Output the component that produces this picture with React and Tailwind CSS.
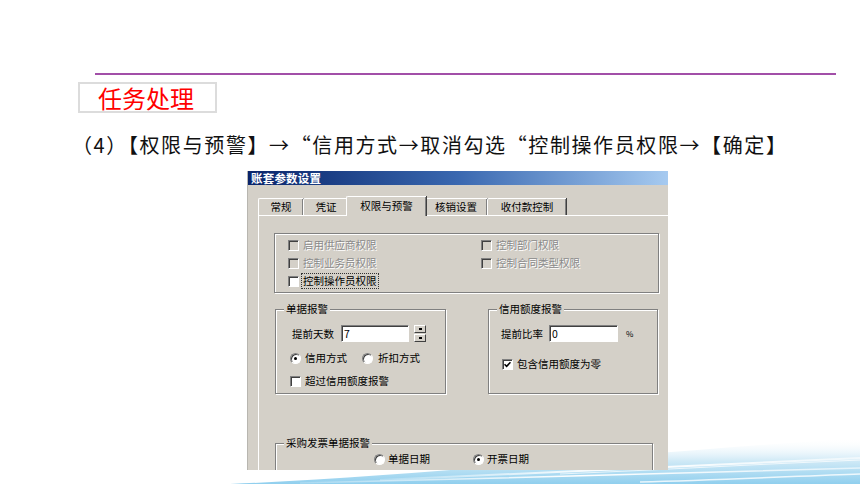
import React from "react";

const CJK = { fontFamily: '"Noto Sans CJK SC", "Noto Sans", sans-serif' };

function Check({ checked = false, disabled = false }) {
  return (
    <span
      className={`flex h-[11px] w-[11px] shrink-0 items-center justify-center border border-t-[#808080] border-l-[#808080] border-r-white border-b-white shadow-[inset_1px_1px_0_#404040] ${
        disabled ? "bg-[#d4d0c8]" : "bg-white"
      }`}
    >
      {checked && (
        <svg width="7" height="7" viewBox="0 0 7 7">
          <path d="M0.5 3.2 L2.6 5.3 L6.5 1.2" fill="none" stroke="#000" strokeWidth="1.6" />
        </svg>
      )}
    </span>
  );
}

function Radio({ checked = false }) {
  return (
    <span className="flex h-[11px] w-[11px] shrink-0 items-center justify-center rounded-full border border-t-[#808080] border-l-[#808080] border-r-white border-b-white bg-white shadow-[inset_1px_1px_0_#404040]">
      {checked && <span className="h-[3px] w-[3px] rounded-full bg-black" />}
    </span>
  );
}

function Group({ label, className, children }) {
  return (
    <div
      className={`relative border border-[#808080] shadow-[1px_1px_0_#fff,inset_1px_1px_0_#fff] ${className}`}
    >
      {label && (
        <span className="absolute left-[8px] top-[-8px] bg-[#d4d0c8] px-[2px] leading-[14px]">
          {label}
        </span>
      )}
      {children}
    </div>
  );
}

const disabledText = "text-[#8a8a8a] [text-shadow:1px_1px_0_#fff]";

function Tab({ label, active, w }) {
  if (active) {
    return (
      <div
        className={`relative z-10 -mx-[2px] mb-[-1px] flex h-[20px] items-start justify-center rounded-tl-[2px] border-l border-t border-white bg-[#d4d0c8] pt-[2px] shadow-[inset_-1px_0_0_#808080,1px_0_0_#404040] ${w}`}
      >
        {label}
      </div>
    );
  }
  return (
    <div
      className={`flex h-[17px] items-center justify-center rounded-tl-[2px] border-l border-t border-white shadow-[inset_-1px_0_0_#808080,1px_0_0_#404040] ${w}`}
    >
      {label}
    </div>
  );
}

function Wave() {
  return (
    <svg
      className="absolute bottom-0 left-0"
      width="860"
      height="70"
      viewBox="0 0 860 70"
    >
      <defs>
        <linearGradient id="wv" x1="0" y1="0" x2="0" y2="1">
          <stop offset="0" stopColor="#ffffff" stopOpacity="0" />
          <stop offset="0.5" stopColor="#cfe9f6" />
          <stop offset="1" stopColor="#90cfee" />
        </linearGradient>
        <linearGradient id="wh" x1="0" y1="0" x2="1" y2="0">
          <stop offset="0" stopColor="#ffffff" stopOpacity="0.2" />
          <stop offset="0.5" stopColor="#ffffff" stopOpacity="1" />
          <stop offset="1" stopColor="#ffffff" stopOpacity="0.6" />
        </linearGradient>
      </defs>
      <path d="M230 70 C 420 62, 620 40, 860 24 L860 70 Z" fill="url(#wv)" />
      <path d="M380 66 C 540 60, 700 52, 860 44" fill="none" stroke="url(#wh)" strokeWidth="2" />
      <path d="M300 69 C 480 64, 680 60, 860 54" fill="none" stroke="url(#wh)" strokeWidth="1.5" />
      <path d="M560 60 C 660 56, 760 50, 860 46" fill="none" stroke="#ffffff" strokeOpacity="0.7" strokeWidth="1" />
      <path d="M640 68 C 720 66, 800 62, 860 60" fill="none" stroke="#ffffff" strokeOpacity="0.8" strokeWidth="1.5" />
    </svg>
  );
}

export default function App() {
  return (
    <div className="relative h-[484px] w-[860px] overflow-hidden bg-white" style={CJK}>
      <Wave />
      <div className="relative pt-[73px]">
        <div className="ml-[95px] h-[2px] w-[741px] bg-[#a24fa8]" />
        <div className="ml-[78px] mt-[7px] flex h-[31px] w-[139px] items-center border-2 border-[#dcdcdc] pl-[18px] text-[24px] leading-none text-[#ff0000]">
          任务处理
        </div>
        <div className="ml-[72px] mt-[20px] h-[24px] whitespace-nowrap text-[20px] leading-[24px] tracking-[1.6px] text-[#111]">
          （4）【权限与预警】→“信用方式→取消勾选“控制操作员权限→【确定】
        </div>

        {/* dialog */}
        <div className="ml-[247px] mt-[14px] flex h-[299px] w-[421px] flex-col overflow-hidden border-l border-[#b8b6b0] bg-[#d4d0c8] text-[10.5px] leading-[14px] text-black">
          <div className="flex h-[14px] shrink-0 items-center bg-linear-to-r from-[#0a246a] via-[#3a68b0] to-[#a6caf0] pl-[3px] text-[11.5px] font-bold tracking-[0.2px] text-white">
            账套参数设置
          </div>
          <div className="mt-[11px] flex h-[19px] items-end pl-[10px]">
            <Tab label="常规" w="w-[45px]" />
            <Tab label="凭证" w="w-[45px]" />
            <Tab label="权限与预警" w="w-[80px]" active />
            <Tab label="核销设置" w="w-[63px]" />
            <Tab label="收付款控制" w="w-[79px]" />
          </div>
          <div className="ml-[10px] flex-1 border-l border-t border-white pl-[15px] pt-[17px]">
            <Group className="h-[60px] w-[385px]">
              <div className="grid grid-cols-[193px_1fr] pl-[13px] pt-[2px]">
                <div className="flex h-[18px] items-center gap-[4px]">
                  <Check disabled />
                  <span className={disabledText}>启用供应商权限</span>
                </div>
                <div className="flex h-[18px] items-center gap-[4px]">
                  <Check disabled />
                  <span className={disabledText}>控制部门权限</span>
                </div>
                <div className="flex h-[18px] items-center gap-[4px]">
                  <Check disabled />
                  <span className={disabledText}>控制业务员权限</span>
                </div>
                <div className="flex h-[18px] items-center gap-[4px]">
                  <Check disabled />
                  <span className={disabledText}>控制合同类型权限</span>
                </div>
                <div className="flex h-[18px] items-center gap-[3px]">
                  <Check />
                  <span className="px-[1px] outline-1 outline-dotted outline-[#333]">
                    控制操作员权限
                  </span>
                </div>
              </div>
            </Group>

            <div className="ml-[1px] mt-[16px] flex gap-[42px]">
              <Group label="单据报警" className="h-[85px] w-[171px]">
                <div className="ml-[16px] mt-[15px] flex h-[17px] items-center">
                  <span className="w-[49px]">提前天数</span>
                  <div className="flex h-[17px] w-[68px] items-center border border-t-[#808080] border-l-[#808080] border-r-white border-b-white bg-white pl-[2px] shadow-[inset_1px_1px_0_#404040]">
                    7
                  </div>
                  <div className="ml-[5px] flex h-[17px] w-[12px] flex-col gap-[1px]">
                    <div className="flex flex-1 items-center justify-center border border-t-white border-l-white border-r-[#404040] border-b-[#404040] bg-[#d4d0c8]">
                      <span className="h-[2px] w-[3px] bg-black" />
                    </div>
                    <div className="flex flex-1 items-center justify-center border border-t-white border-l-white border-r-[#404040] border-b-[#404040] bg-[#d4d0c8]">
                      <span className="h-[2px] w-[3px] bg-black" />
                    </div>
                  </div>
                </div>
                <div className="ml-[14px] mt-[8px] flex h-[16px] items-center">
                  <Radio checked />
                  <span className="ml-[4px]">信用方式</span>
                  <span className="ml-[15px]">
                    <Radio />
                  </span>
                  <span className="ml-[5px]">折扣方式</span>
                </div>
                <div className="ml-[14px] mt-[7px] flex h-[16px] items-center gap-[4px]">
                  <Check />
                  <span>超过信用额度报警</span>
                </div>
              </Group>

              <Group label="信用额度报警" className="h-[85px] w-[170px]">
                <div className="ml-[12px] mt-[15px] flex h-[17px] items-center">
                  <span className="w-[48px]">提前比率</span>
                  <div className="flex h-[17px] w-[69px] items-center border border-t-[#808080] border-l-[#808080] border-r-white border-b-white bg-white pl-[2px] shadow-[inset_1px_1px_0_#404040]">
                    0
                  </div>
                  <span className="ml-[8px] text-[8px]">%</span>
                </div>
                <div className="ml-[13px] mt-[14px] flex h-[16px] items-center gap-[4px]">
                  <Check checked />
                  <span>包含信用额度为零</span>
                </div>
              </Group>
            </div>

            <Group label="采购发票单据报警" className="ml-[1px] mt-[49px] h-[29px] w-[378px]">
              <div className="ml-[98px] mt-[7px] flex h-[16px] items-center">
                <Radio />
                <span className="ml-[3px]">单据日期</span>
                <span className="ml-[43px]">
                  <Radio checked />
                </span>
                <span className="ml-[3px]">开票日期</span>
              </div>
            </Group>
          </div>
        </div>
      </div>
    </div>
  );
}
